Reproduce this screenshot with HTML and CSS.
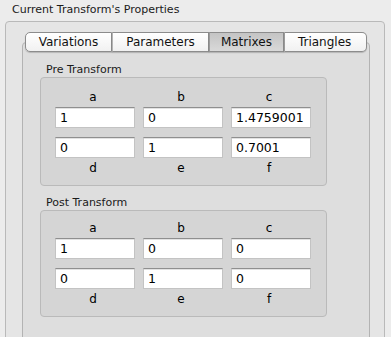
FILE: index.html
```html
<!DOCTYPE html>
<html lang="en">

<head>
    <meta charset="UTF-8">
    <meta name="viewport" content="width=device-width, initial-scale=1.0">
    <title>Transform Properties</title>
    <link rel="stylesheet" href="styles.css">
</head>

<body>
    <div class="box-title">Current Transform's Properties</div>

    <div class="outer-box">
        <div class="tabs">
            <div class="tab">Variations</div>
            <div class="tab">Parameters</div>
            <div class="tab selected">Matrixes</div>
            <div class="tab">Triangles</div>
        </div>

        <div class="tab-pane">
            <div class="group-label">Pre Transform</div>
            <div class="group-box pre">
                <div class="coef">a</div>
                <div class="coef">b</div>
                <div class="coef">c</div>
                <input class="field" type="text" value="1">
                <input class="field" type="text" value="0">
                <input class="field" type="text" value="1.4759001">
                <input class="field row-two" type="text" value="0">
                <input class="field row-two" type="text" value="1">
                <input class="field row-two" type="text" value="0.7001">
                <div class="coef">d</div>
                <div class="coef">e</div>
                <div class="coef">f</div>
            </div>

            <div class="group-label post-label">Post Transform</div>
            <div class="group-box post">
                <div class="coef">a</div>
                <div class="coef">b</div>
                <div class="coef">c</div>
                <input class="field" type="text" value="1">
                <input class="field" type="text" value="0">
                <input class="field" type="text" value="0">
                <input class="field row-two" type="text" value="0">
                <input class="field row-two" type="text" value="1">
                <input class="field row-two" type="text" value="0">
                <div class="coef">d</div>
                <div class="coef">e</div>
                <div class="coef">f</div>
            </div>
        </div>
    </div>
</body>

</html>
```

FILE: styles.css
```css
html {
    overflow: hidden;
}

body {
    margin: 0;
    font-family: "DejaVu Sans", sans-serif;
    font-size: 11px;
    color: #000;
    background-color: #ececec;
}

.box-title {
    height: 21px;
    line-height: 20px;
    padding-left: 12px;
    color: #1a1a1a;
}

/* the big grey box round the tab view */
.outer-box {
    margin-left: 5px;
    width: 380px;
    height: 330px;
    padding: 10px 0 0 16px;
    box-sizing: border-box;
    border: 1px solid #b9b9b9;
    border-radius: 4px 4px 0 0;
    background-color: #e5e5e5;
}

.tabs {
    position: relative;
    z-index: 2;
    display: flex;
    justify-content: center;
    width: 348px;
    height: 20px;
    margin-bottom: -10px;
}

.tab {
    height: 20px;
    line-height: 19px;
    padding: 0 13px;
    box-sizing: border-box;
    font-size: 12px;
    color: #111;
    border: 1px solid #8c8c8c;
    border-left: 1px solid #b4b4b4;
    background: linear-gradient(#ffffff, #f1f1f1);
    box-shadow: 0 1px 1px rgba(0, 0, 0, 0.18);
}

.tab:first-child {
    border-left-color: #8c8c8c;
    border-radius: 5px 0 0 5px;
}

.tab:last-child {
    border-radius: 0 5px 5px 0;
    padding-right: 15px;
}

.tab.selected {
    background: linear-gradient(#c4c4c4, #d9d9d9);
    border-left-color: #9a9a9a;
    padding: 0 11px;
}

.tab.selected + .tab {
    border-left-color: #9a9a9a;
}

.tab-pane {
    width: 348px;
    height: 300px;
    padding: 20px 0 0 17px;
    box-sizing: border-box;
    border: 1px solid #b3b3b3;
    border-radius: 4px 4px 0 0;
    background-color: #dedede;
}

.group-label {
    height: 14px;
    line-height: 14px;
    padding-left: 6px;
    color: #1a1a1a;
}

.post-label {
    margin-top: 10px;
}

.group-box {
    display: grid;
    grid-template-columns: 80px 80px 80px;
    column-gap: 8px;
    width: 287px;
    padding: 12px 14px 10px 14px;
    box-sizing: border-box;
    border: 1px solid #bababa;
    border-radius: 4px;
    background-color: #d5d5d5;
}

.group-box.post {
    padding-top: 10px;
}

.coef {
    height: 14px;
    line-height: 14px;
    text-align: center;
    font-size: 12px;
    padding-right: 4px;
}

.field {
    height: 21px;
    margin: 3px 0;
    padding: 0 4px;
    box-sizing: border-box;
    font-family: "DejaVu Sans", sans-serif;
    font-size: 12.5px;
    color: #000;
    border: 1px solid #c3c3c3;
    border-top-color: #8f8f8f;
    box-shadow: inset 0 1px 0 #e2e2e2;
    background-color: #fff;
    outline: none;
}

.field.row-two {
    margin-top: 6px;
}
```
